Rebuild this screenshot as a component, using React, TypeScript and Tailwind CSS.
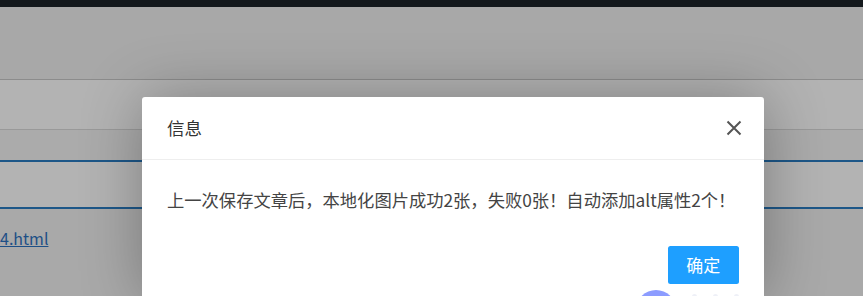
// Layer dialog over a dimmed page

export default function App() {
  return (
    <div
      className="relative h-[296px] w-full overflow-hidden bg-[#a9a9a9]"
      style={{ fontFamily: '"Noto Sans CJK SC", "Noto Sans", sans-serif' }}
    >
      {/* dimmed page behind the dialog */}
      <div className="h-[7px] bg-[#13181c]" />
      <div className="h-[72px] bg-[#a8a8a8]" />
      <div className="h-px bg-[#8c8c8c]" />
      <div className="h-[49px] bg-[#b3b3b3]" />
      <div className="h-px bg-[#999999]" />
      <div className="h-[30px] bg-[#ababab]" />
      <div className="h-[2px] bg-[#1d5788]" />
      <div className="h-[45px] bg-[#b3b3b3]" />
      <div className="h-[2px] bg-[#1d5788]" />
      <div className="pt-[17px]">
        <a className="text-[16px] leading-[22px] text-[#1d4f86] underline">4.html</a>
      </div>

      {/* dialog */}
      <div className="absolute left-[142px] top-[97px] w-[622px] rounded-[3px] bg-white shadow-[1px_1px_62px_rgba(0,0,0,0.3)]">
        <div className="flex h-[63px] items-center justify-between border-b border-[#eeeeee] pl-[25px] pr-[22px] text-[17.5px] text-[#333333]">
          <span>信息</span>
          <svg width="16" height="16" viewBox="0 0 16 16" className="text-[#555555]">
            <path d="M1.5 1.5 L14.5 14.5 M14.5 1.5 L1.5 14.5" stroke="currentColor" strokeWidth="2" fill="none" />
          </svg>
        </div>
        <div className="whitespace-nowrap px-[25px] py-[25px] text-[17.3px] leading-[30px] text-[#444444]">
          上一次保存文章后，本地化图片成功2张，失败0张！自动添加alt属性2个！
        </div>
        <div className="flex justify-end pb-[15px] pr-[25px] pt-[6px]">
          <button className="h-[37.5px] rounded-[2.5px] bg-[#1e9fff] px-[18.75px] text-[17px] text-white">
            确定
          </button>
        </div>
      </div>

      {/* floating widget peeking at the bottom */}
      <div className="absolute left-[636px] top-[290px] flex items-start gap-[16px]">
        <div className="h-[40px] w-[40px] rounded-full bg-[#8c9cff]" />
        <div className="mt-[4px] flex gap-[16px]">
          <div className="h-[5px] w-[5px] rounded-full bg-[#eef0f7]" />
          <div className="h-[5px] w-[5px] rounded-full bg-[#eef0f7]" />
          <div className="h-[5px] w-[5px] rounded-full bg-[#eef0f7]" />
        </div>
      </div>
    </div>
  );
}
